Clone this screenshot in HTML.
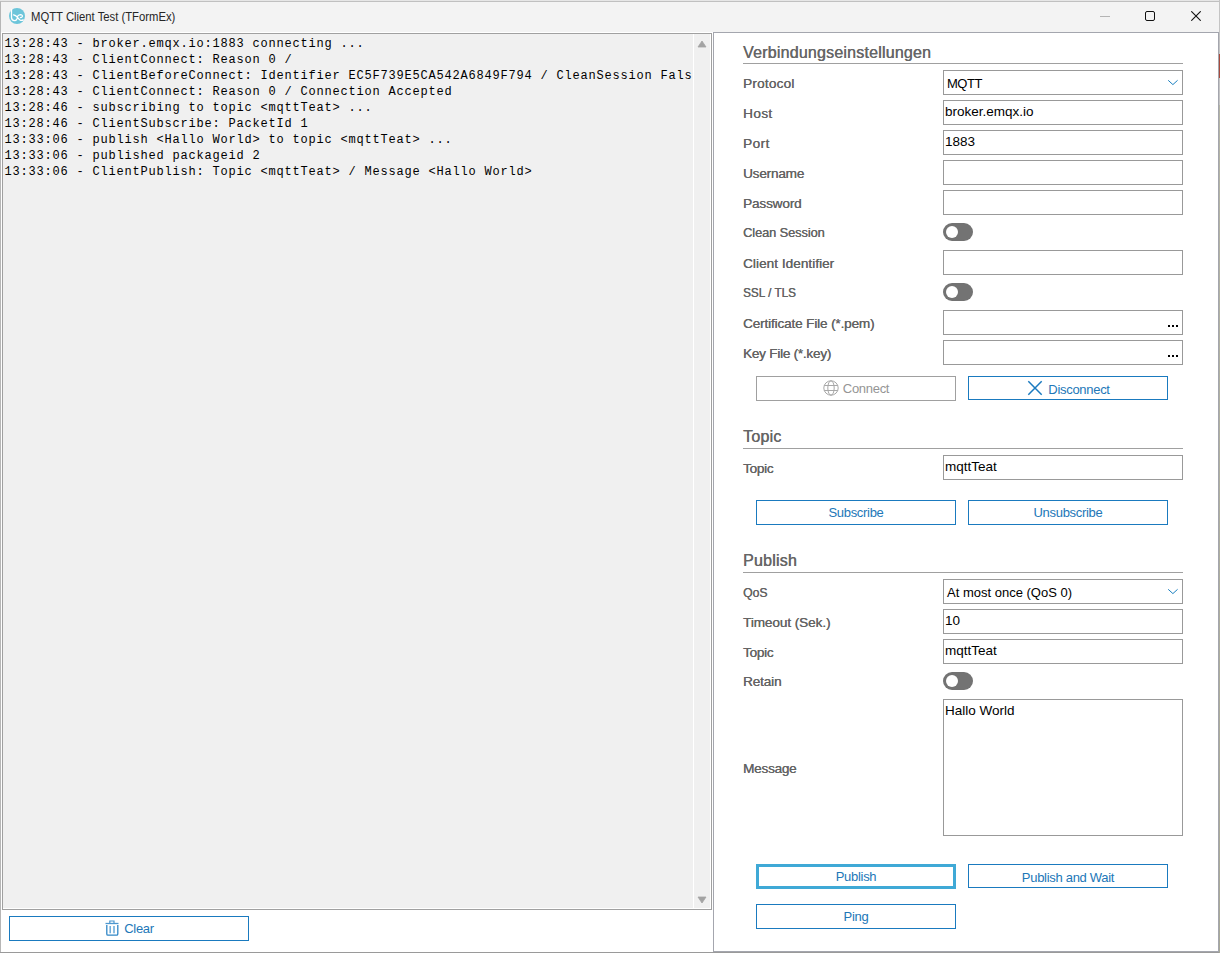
<!DOCTYPE html>
<html><head><meta charset="utf-8">
<style>
*{margin:0;padding:0;box-sizing:border-box}
html,body{width:1220px;height:953px;overflow:hidden;background:#9a9a9a}
body{position:relative;font-family:"Liberation Sans",sans-serif}
.a{position:absolute}
#toprow{left:0;top:0;width:1220px;height:1px;background:#e6e6e6}
#win{left:0;top:1px;width:1219px;height:951px;background:#ffffff;border-left:1px solid #b6b6b6;border-top:1px solid #c0c0c0}
#rcol{left:1219px;top:0;width:1px;height:953px;background:linear-gradient(#c4c4c4 0,#c4c4c4 54px,#a84a3c 54px,#a84a3c 78px,#c4c4c4 78px,#c4c4c4 105px,#b4b4a6 105px,#a8a898 953px)}
#title{left:1px;top:2px;width:1218px;height:30px;background:#f3f3f3}
#ttext{left:31px;top:10px;font-size:12px;color:#262626;white-space:nowrap;transform:scaleX(0.94);transform-origin:0 0}
#memo{left:2px;top:33px;width:710px;height:877px;background:#f0f0f0;border:1px solid #a0a0a0;box-shadow:inset -1px -1px 0 #fff}
#memo pre{position:absolute;left:1.4px;top:2px;font-family:"Liberation Mono",monospace;font-size:12px;letter-spacing:0.8px;line-height:16px;color:#000}
#sb{left:693px;top:34px;width:17px;height:874px;border-left:1px solid #ffffff;background:#f0f0f0}
#rp{left:713px;top:32px;width:506px;height:920px;background:#fff;border:1px solid #a4a6ae}
.h{font-size:16px;color:#666;white-space:nowrap;letter-spacing:0.2px;text-shadow:0.35px 0 0 #666}
.hl{height:1px;background:#a0a0a0;left:743px;width:440px}
.lb{left:743px;font-size:13.6px;color:#646464;white-space:nowrap;text-shadow:0.2px 0 0 #646464}
.in{left:943px;width:240px;height:25px;border:1px solid #999;background:#fff}
.it{position:absolute;left:1px;top:3px;font-size:13.5px;color:#000;white-space:nowrap}
.tg{left:943px;width:30px;height:18px;border-radius:9px;background:#737373}
.tg::after{content:"";position:absolute;left:3px;top:3px;width:12px;height:12px;border-radius:6px;background:#fff}
.bt{height:25px;border:1px solid #1a7abf;background:#fff;color:#2277b8;font-size:13px;letter-spacing:-0.3px;text-align:center;line-height:23px;white-space:nowrap}
.dots{position:absolute;left:224px;top:14px;width:10px;height:2px;background:linear-gradient(90deg,#000 0,#000 2px,transparent 2px,transparent 4px,#000 4px,#000 6px,transparent 6px,transparent 8px,#000 8px,#000 10px)}
.chev{position:absolute;left:223px;top:8px}
</style></head><body>
<div class="a" id="toprow"></div>
<div class="a" id="win"></div>
<div class="a" id="rcol"></div>
<div class="a" id="title"></div>
<svg class="a" style="left:8px;top:7px" width="18" height="18" viewBox="0 0 18 18">
<circle cx="9" cy="9" r="8" fill="#6cc5da"/>
<g fill="none" stroke="#fff" stroke-width="1.3" stroke-linecap="round">
<path d="M3.5 2.6 V10.6 Q3.5 13.6 6.6 13.6 Q8.4 13.6 9.4 11.2"/>
<path d="M5.6 7.8 Q7.6 8.2 9.1 9.9 Q10.6 12 12 13 Q13.6 13.9 15.2 12.9"/>
<path d="M9.1 9.9 Q10.5 7.8 12.4 7.7 Q14.6 7.7 14.4 9.4 Q14 10.6 12.4 10.6"/>
</g></svg>
<div class="a" id="ttext">MQTT Client Test (TFormEx)</div>
<!-- window buttons -->
<div class="a" style="left:1100px;top:16px;width:10px;height:1px;background:#b4b4b4"></div>
<div class="a" style="left:1145px;top:11px;width:10px;height:10px;border:1px solid #111;border-radius:2px"></div>
<svg class="a" style="left:1191px;top:11px" width="10" height="10" viewBox="0 0 10 10"><path d="M0.3 0.3 L9.7 9.7 M9.7 0.3 L0.3 9.7" stroke="#111" stroke-width="1.1"/></svg>

<div class="a" id="memo"><pre>13:28:43 - broker.emqx.io:1883 connecting ...
13:28:43 - ClientConnect: Reason 0 /
13:28:43 - ClientBeforeConnect: Identifier EC5F739E5CA542A6849F794 / CleanSession Fals
13:28:43 - ClientConnect: Reason 0 / Connection Accepted
13:28:46 - subscribing to topic &lt;mqttTeat&gt; ...
13:28:46 - ClientSubscribe: PacketId 1
13:33:06 - publish &lt;Hallo World&gt; to topic &lt;mqttTeat&gt; ...
13:33:06 - published packageid 2
13:33:06 - ClientPublish: Topic &lt;mqttTeat&gt; / Message &lt;Hallo World&gt;</pre></div>
<div class="a" id="sb"></div>
<svg class="a" style="left:697px;top:40px" width="10" height="8" viewBox="0 0 10 8"><path d="M1 7 L5 1 L9 7 Z" fill="#a3a3a3" stroke="#a3a3a3" stroke-width="0.8" stroke-linejoin="round"/></svg>
<svg class="a" style="left:697px;top:896px" width="10" height="8" viewBox="0 0 10 8"><path d="M1 1 L5 7 L9 1 Z" fill="#a3a3a3" stroke="#a3a3a3" stroke-width="0.8" stroke-linejoin="round"/></svg>

<div class="a bt" style="left:9px;top:916px;width:240px;padding-left:20px">Clear</div>
<svg class="a" style="left:104px;top:919px" width="16" height="18" viewBox="0 0 16 18">
<path d="M1.5 4.5 H14.5" stroke="#4d97cf" stroke-width="1.3"/>
<path d="M5.8 4 V2 H10 V4" fill="none" stroke="#4d97cf" stroke-width="1.2"/>
<path d="M2.8 6 V15 Q2.8 16.2 4 16.2 H12.5 Q13.8 16.2 13.8 15 V6" fill="none" stroke="#2f86c6" stroke-width="1.3"/>
<path d="M6.2 7 V14.2 M10 7 V14.2" stroke="#6aa9d8" stroke-width="1.5"/>
</svg>

<div class="a" id="rp"></div>

<div class="a h" style="left:743px;top:43.6px">Verbindungseinstellungen</div>
<div class="a hl" style="top:63px"></div>

<div class="a lb" style="top:76px;letter-spacing:0.2px">Protocol</div>
<div class="a in" style="top:70px"><span class="it" style="left:3px;top:5px;font-size:13px;letter-spacing:-0.5px">MQTT</span><svg class="chev" width="12" height="7" viewBox="0 0 12 7"><path d="M1.2 1.3 L5.9 5.6 L10.6 1.3" fill="none" stroke="#1a7fc0" stroke-width="1"/></svg></div>
<div class="a lb" style="top:106px;letter-spacing:0.4px">Host</div>
<div class="a in" style="top:100px"><span class="it">broker.emqx.io</span></div>
<div class="a lb" style="top:136px;letter-spacing:0.45px">Port</div>
<div class="a in" style="top:130px"><span class="it">1883</span></div>
<div class="a lb" style="top:166px;letter-spacing:-0.2px">Username</div>
<div class="a in" style="top:160px"></div>
<div class="a lb" style="top:196px;letter-spacing:-0.15px">Password</div>
<div class="a in" style="top:190px"></div>
<div class="a lb" style="top:225px;letter-spacing:-0.1px;transform:scaleX(0.945);transform-origin:0 0">Clean Session</div>
<div class="a tg" style="top:223px"></div>
<div class="a lb" style="top:256px;letter-spacing:0.03px">Client Identifier</div>
<div class="a in" style="top:250px"></div>
<div class="a lb" style="top:285px;transform:scaleX(0.865);transform-origin:0 0">SSL / TLS</div>
<div class="a tg" style="top:283px"></div>
<div class="a lb" style="top:316px;letter-spacing:-0.16px">Certificate File (*.pem)</div>
<div class="a in" style="top:310px"><div class="dots"></div></div>
<div class="a lb" style="top:346px;letter-spacing:-0.26px">Key File (*.key)</div>
<div class="a in" style="top:340px"><div class="dots"></div></div>
<div class="a bt" style="left:756px;top:376px;width:200px;border-color:#a0a0a0;color:#959595;padding-left:20px">Connect</div>
<svg class="a" style="left:823px;top:380px" width="16" height="16" viewBox="0 0 16 16">
<g fill="none" stroke="#a8a8a8" stroke-width="1">
<circle cx="8" cy="8" r="7.2"/>
<ellipse cx="8" cy="8" rx="3.2" ry="7.2"/>
<path d="M1.2 5.5 H14.8 M1.2 10.5 H14.8"/>
</g></svg>
<div class="a bt" style="left:968px;top:376px;width:200px;height:24px;line-height:25px;padding-left:22px">Disconnect</div>
<svg class="a" style="left:1027px;top:380px" width="16" height="16" viewBox="0 0 16 16"><path d="M1.3 1.3 L14.7 14.7 M14.7 1.3 L1.3 14.7" stroke="#1a7abf" stroke-width="1.5"/></svg>

<div class="a h" style="left:743px;top:427.6px">Topic</div>
<div class="a hl" style="top:448px"></div>
<div class="a lb" style="top:461px;letter-spacing:-0.27px">Topic</div>
<div class="a in" style="top:455px"><span class="it">mqttTeat</span></div>
<div class="a bt" style="left:756px;top:500px;width:200px">Subscribe</div>
<div class="a bt" style="left:968px;top:500px;width:200px">Unsubscribe</div>

<div class="a h" style="left:743px;top:551.6px">Publish</div>
<div class="a hl" style="top:572px"></div>
<div class="a lb" style="top:585px;transform:scaleX(0.9);transform-origin:0 0">QoS</div>
<div class="a in" style="top:579px"><span class="it" style="left:3px;top:5px;font-size:13px">At most once (QoS 0)</span><svg class="chev" width="12" height="7" viewBox="0 0 12 7"><path d="M1.2 1.3 L5.9 5.6 L10.6 1.3" fill="none" stroke="#1a7fc0" stroke-width="1"/></svg></div>
<div class="a lb" style="top:615px;letter-spacing:-0.09px">Timeout (Sek.)</div>
<div class="a in" style="top:609px"><span class="it">10</span></div>
<div class="a lb" style="top:645px;letter-spacing:-0.27px">Topic</div>
<div class="a in" style="top:639px"><span class="it">mqttTeat</span></div>
<div class="a lb" style="top:674px;letter-spacing:-0.16px">Retain</div>
<div class="a tg" style="top:672px"></div>
<div class="a lb" style="top:761px;letter-spacing:-0.25px">Message</div>
<div class="a in" style="top:699px;height:137px"><span class="it">Hallo World</span></div>
<div class="a bt" style="left:756px;top:864px;width:200px;border:3px solid #3fa9d6;line-height:19px">Publish</div>
<div class="a bt" style="left:968px;top:864px;width:200px;height:24px;line-height:25px">Publish and Wait</div>
<div class="a bt" style="left:756px;top:904px;width:200px">Ping</div>
</body></html>
